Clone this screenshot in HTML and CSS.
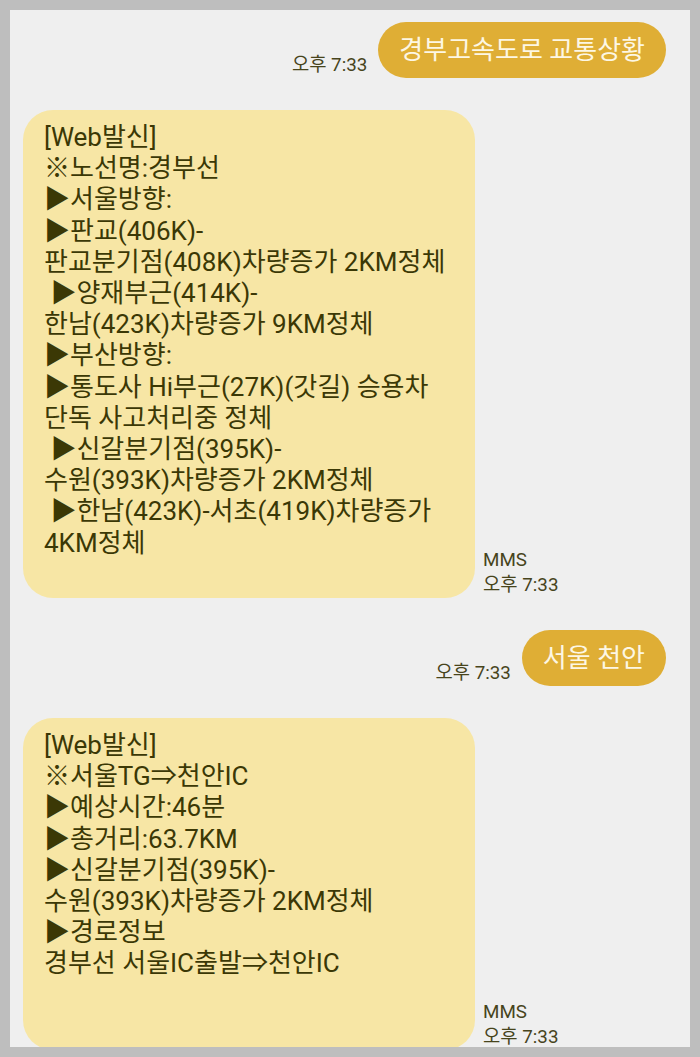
FILE: index.html
```html
<!DOCTYPE html>
<html lang="ko">
<head>
<meta charset="utf-8">
<title>메시지</title>
<link rel="stylesheet" href="styles.css">
</head>
<body>
<div class="screen">
  <div class="row sent">
    <div class="meta"><span>오후 7:33</span></div>
    <div class="bubble out">경부고속도로 교통상황</div>
  </div>
  <div class="row recv">
<div class="bubble in">[Web발신]
※노선명:경부선
▶서울방향:
▶판교(406K)-
판교분기점(408K)차량증가 2KM정체
 ▶양재부근(414K)-
한남(423K)차량증가 9KM정체
▶부산방향:
▶통도사 Hi부근(27K)(갓길) 승용차
단독 사고처리중 정체
 ▶신갈분기점(395K)-
수원(393K)차량증가 2KM정체
 ▶한남(423K)-서초(419K)차량증가
4KM정체
&nbsp;</div>
    <div class="meta"><span>MMS</span><span>오후 7:33</span></div>
  </div>
  <div class="row sent">
    <div class="meta"><span>오후 7:33</span></div>
    <div class="bubble out">서울 천안</div>
  </div>
  <div class="row recv">
<div class="bubble in">[Web발신]
※서울TG⇒천안IC
▶예상시간:46분
▶총거리:63.7KM
▶신갈분기점(395K)-
수원(393K)차량증가 2KM정체
▶경로정보
경부선 서울IC출발⇒천안IC
&nbsp;
&nbsp;</div>
    <div class="meta"><span>MMS</span><span>오후 7:33</span></div>
  </div>
</div>
</body>
</html>
```

FILE: styles.css
```css
html, body {
  margin: 0;
  padding: 0;
}
body {
  background: #bebebe;
  font-family: "Roboto", "Noto Sans CJK KR", sans-serif;
}
.screen {
  margin: 10px;
  height: 1037px;
  box-sizing: border-box;
  background: #efefef;
  overflow: hidden;
  padding: 12px 24px 0 13px;
  display: flex;
  flex-direction: column;
  gap: 32px;
}
.row {
  display: flex;
  align-items: flex-end;
}
.row.sent {
  justify-content: flex-end;
  gap: 11px;
}
.row.recv {
  gap: 8px;
}
.meta {
  display: flex;
  flex-direction: column;
  font-size: 18.8px;
  line-height: 25px;
  color: #47441c;
  white-space: nowrap;
}
.bubble.out {
  height: 56px;
  line-height: 56px;
  padding: 0 21px;
  border-radius: 28px;
  background: #dfae35;
  color: #fdf7e4;
  font-size: 26px;
  white-space: nowrap;
}
.bubble.in {
  width: 452px;
  box-sizing: border-box;
  padding: 12px 20px 8px 21px;
  border-radius: 30px;
  background: #f7e6a5;
  color: #3b3805;
  font-size: 26px;
  line-height: 31.2px;
  white-space: pre;
}
```
